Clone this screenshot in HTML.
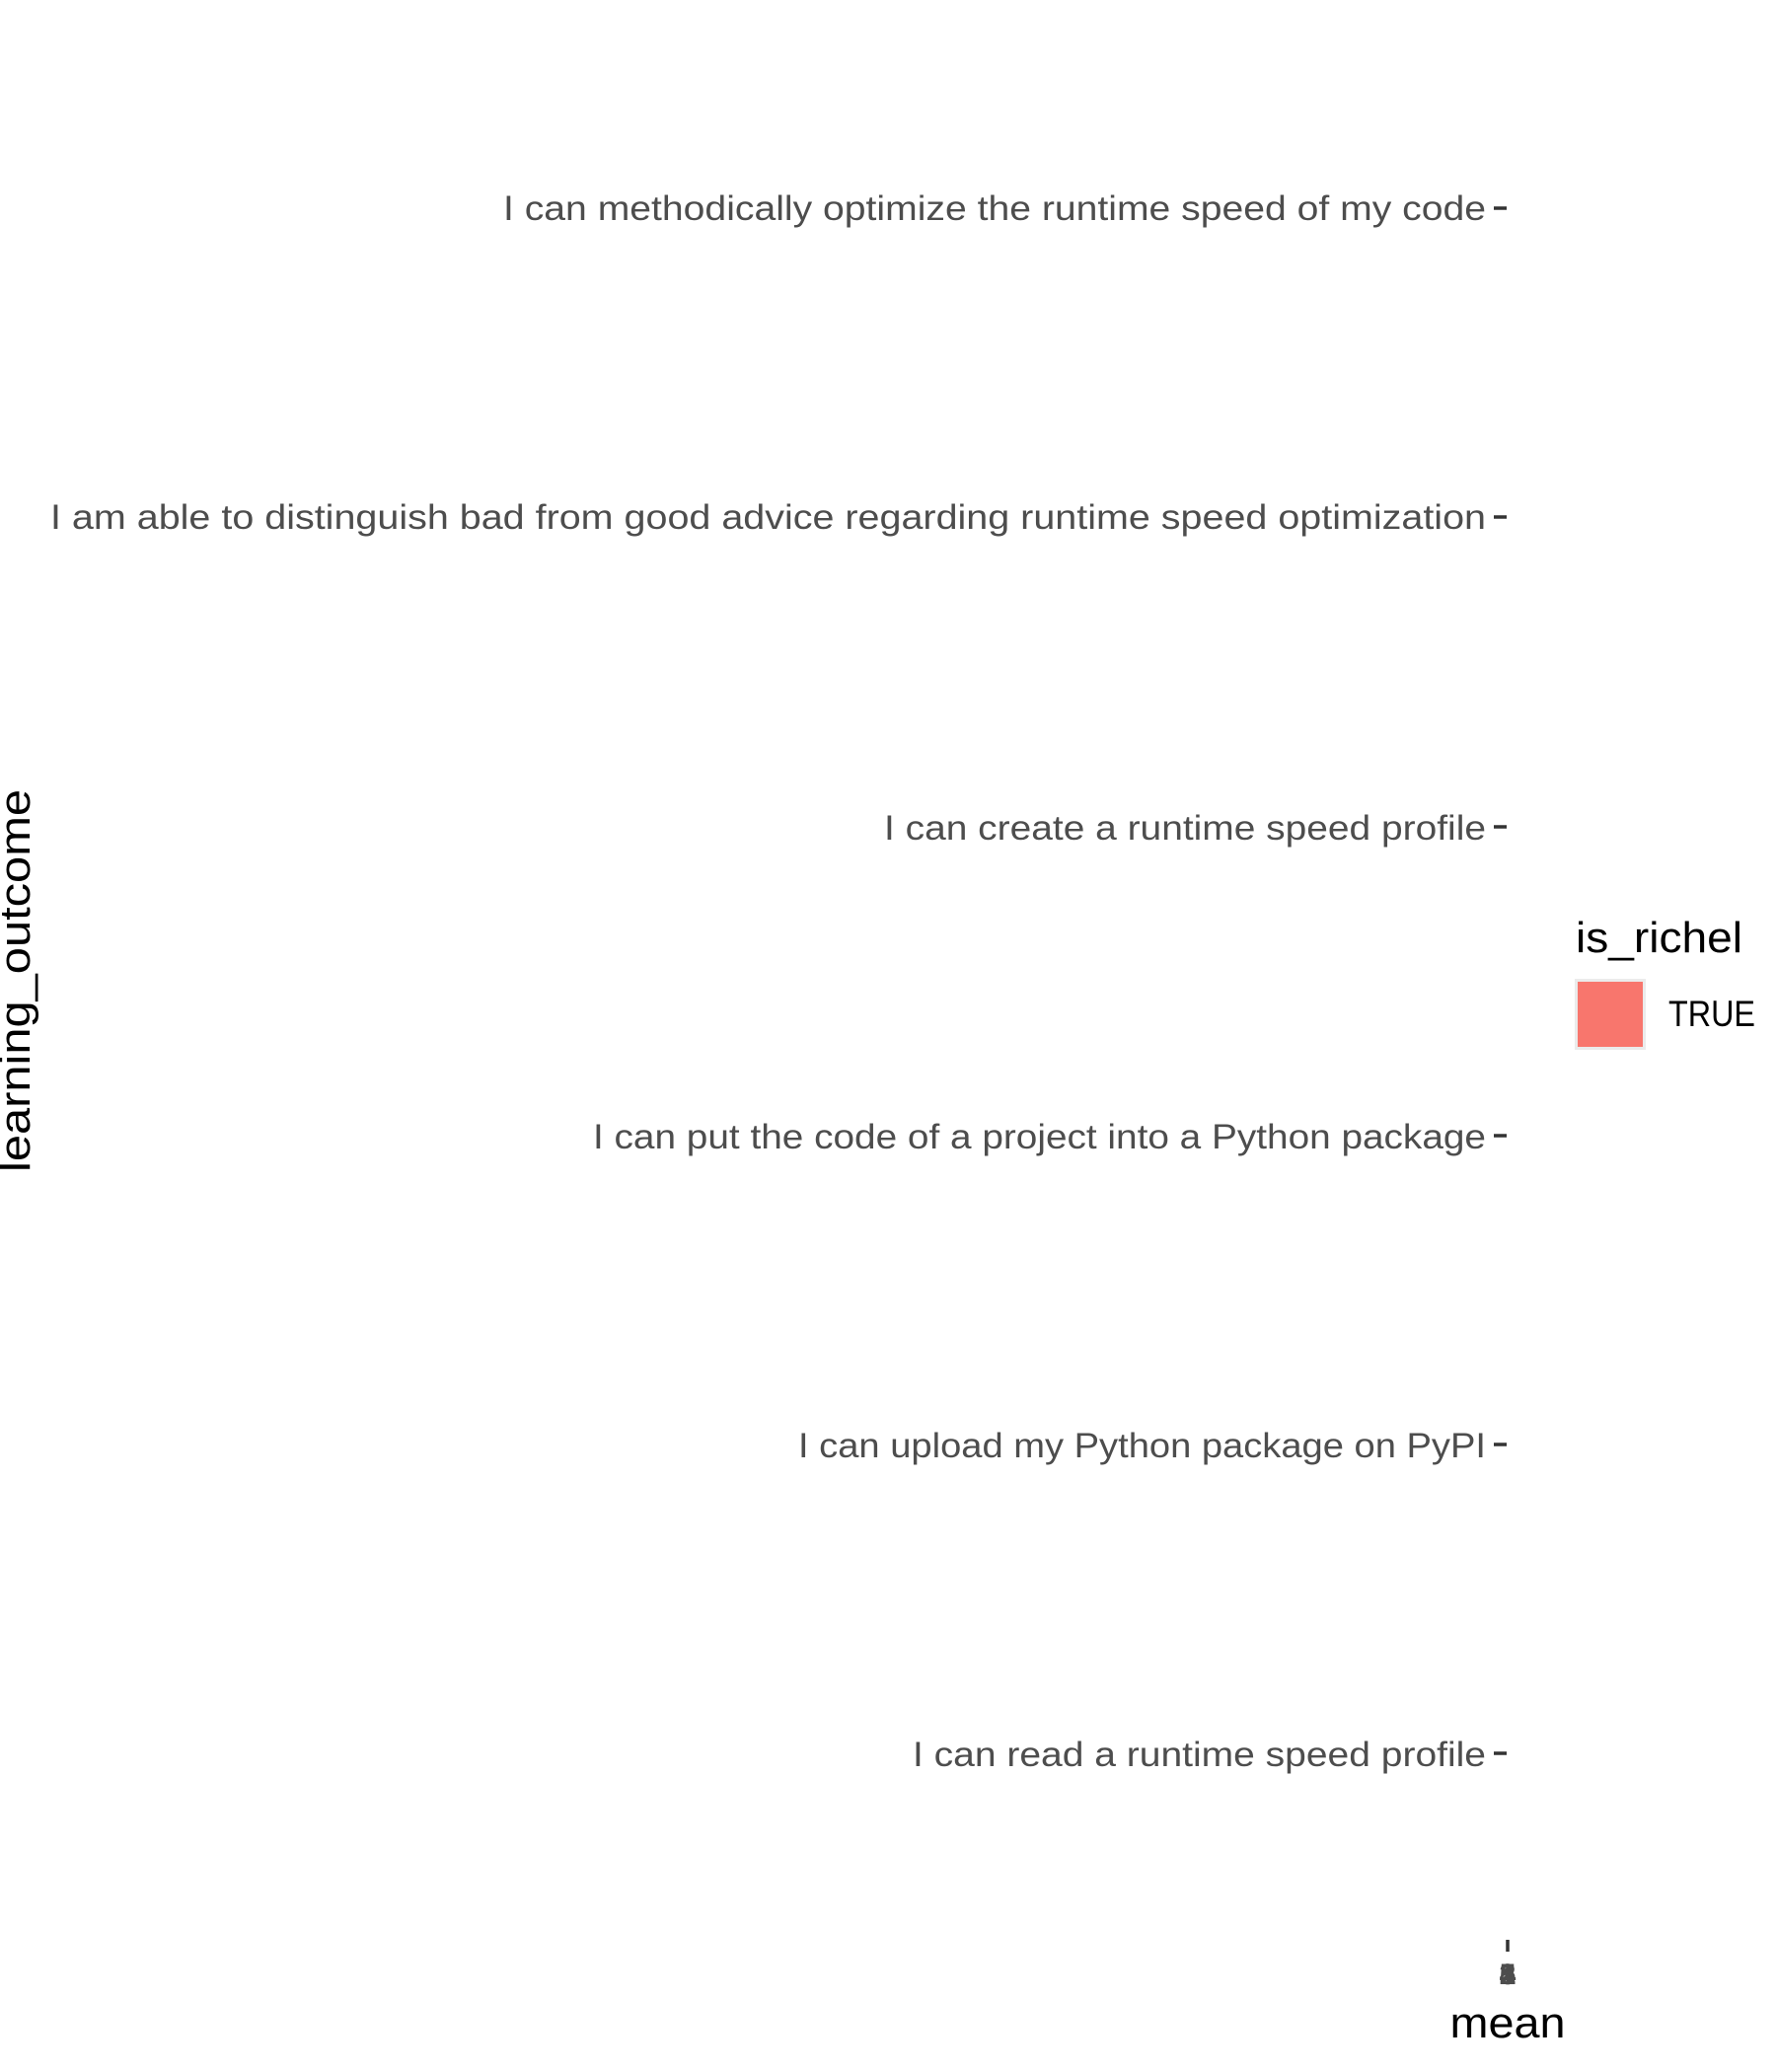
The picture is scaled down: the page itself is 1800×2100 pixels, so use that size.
<!DOCTYPE html>
<html><head><meta charset="utf-8"><style>html,body{margin:0;padding:0;background:#fff;width:1800px;height:2100px;overflow:hidden}</style></head>
<body>
<svg width="1800" height="2100" xmlns="http://www.w3.org/2000/svg" font-family="Liberation Sans, DejaVu Sans, sans-serif">
<g fill="#4d4d4d" font-size="35" text-anchor="end">
<text x="1506" y="223" textLength="996" lengthAdjust="spacingAndGlyphs">I can methodically optimize the runtime speed of my code</text>
<text x="1506" y="536" textLength="1455" lengthAdjust="spacingAndGlyphs">I am able to distinguish bad from good advice regarding runtime speed optimization</text>
<text x="1506" y="851" textLength="610" lengthAdjust="spacingAndGlyphs">I can create a runtime speed profile</text>
<text x="1506" y="1164" textLength="905" lengthAdjust="spacingAndGlyphs">I can put the code of a project into a Python package</text>
<text x="1506" y="1477" textLength="697" lengthAdjust="spacingAndGlyphs">I can upload my Python package on PyPI</text>
<text x="1506" y="1790" textLength="581" lengthAdjust="spacingAndGlyphs">I can read a runtime speed profile</text>
</g>
<g stroke="#333" stroke-width="3.5">
<line x1="1514" y1="211" x2="1527" y2="211"/>
<line x1="1514" y1="524" x2="1527" y2="524"/>
<line x1="1514" y1="838" x2="1527" y2="838"/>
<line x1="1514" y1="1151" x2="1527" y2="1151"/>
<line x1="1514" y1="1464" x2="1527" y2="1464"/>
<line x1="1514" y1="1777" x2="1527" y2="1777"/>
<line x1="1528" y1="1966" x2="1528" y2="1978"/>
</g>
<g fill="#4d4d4d" font-size="30" font-weight="bold" text-anchor="middle">
<text x="1528" y="2011">1</text><text x="1528" y="2011">2</text><text x="1528" y="2011">3</text><text x="1528" y="2011">4</text><text x="1528" y="2011">5</text>
</g>
<text x="1528" y="2065" font-size="44" text-anchor="middle" fill="#000" textLength="117" lengthAdjust="spacingAndGlyphs">mean</text>
<text transform="translate(30,994) rotate(-90)" font-size="44" text-anchor="middle" fill="#000" textLength="388" lengthAdjust="spacingAndGlyphs">learning_outcome</text>
<text x="1597" y="965" font-size="44" fill="#000" textLength="169" lengthAdjust="spacingAndGlyphs">is_richel</text>
<rect x="1597.5" y="993.5" width="69" height="69" fill="#F8766D" stroke="#ebebeb" stroke-width="3"/>
<text x="1691" y="1040" font-size="37" fill="#000" textLength="88" lengthAdjust="spacingAndGlyphs">TRUE</text>
</svg>
</body></html>
